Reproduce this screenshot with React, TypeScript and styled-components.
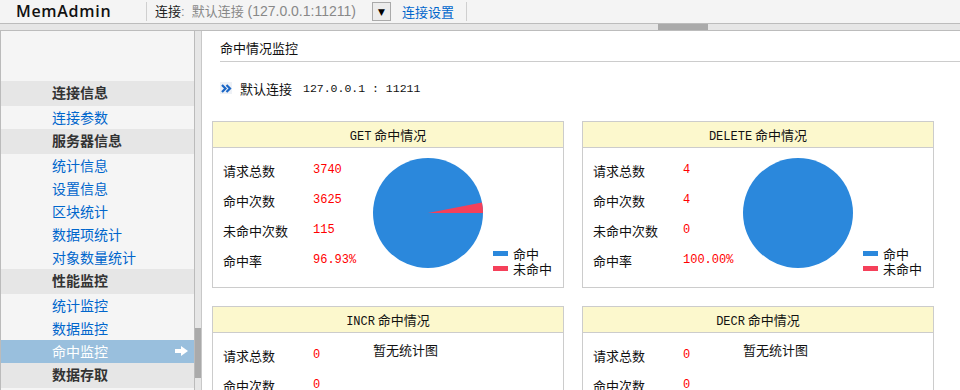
import React from 'react';
import styled, { createGlobalStyle } from 'styled-components';

const GlobalStyle = createGlobalStyle`
  html, body {
    margin: 0;
    padding: 0;
    background: #fff;
  }
  body {
    font-family: "Noto Sans CJK SC", sans-serif;
    font-size: 13px;
    color: #222;
  }
  #root {
    width: 960px;
    height: 390px;
    overflow: hidden;
  }
`;

const Page = styled.div`
  display: flex;
  flex-direction: column;
  height: 390px;
`;

const TopBar = styled.div`
  height: 23px;
  background: #f4f4f4;
  border-bottom: 1px solid #bcbcbc;
  display: flex;
  align-items: center;
  flex: 0 0 auto;
`;

const Brand = styled.div`
  width: 130px;
  padding-left: 16px;
  font-family: "Open Sans", "Liberation Sans", sans-serif;
  font-size: 16px;
  font-weight: 600;
  letter-spacing: 0.7px;
  color: #111;
  line-height: 23px;
`;

const Sep = styled.div`
  width: 1px;
  height: 19px;
  background: #cfcfcf;
`;

const ConnText = styled.div`
  width: 225px;
  padding-left: 8px;
  box-sizing: border-box;
  font-family: "Liberation Sans", "Noto Sans CJK SC", sans-serif;
  font-size: 13px;
  line-height: 23px;
  color: #888;
  white-space: nowrap;

  b {
    font-weight: normal;
    color: #222;
  }
`;

const HeadAddr = styled.span`
  font-size: 14px;
`;

const DropBox = styled.div`
  width: 17px;
  height: 17px;
  border: 1px solid #aaa;
  background: #ececec;
  display: flex;
  align-items: center;
  justify-content: center;
  font-size: 9px;
  color: #000;
  font-family: "DejaVu Sans", sans-serif;
`;

const HeadLink = styled.a`
  margin: 0 12px 0 11px;
  font-size: 13px;
  line-height: 23px;
  color: #0066cc;
  text-decoration: none;
`;

const Band = styled.div`
  height: 6px;
  background: #e6e6e6;
  border-bottom: 1px solid #bcbcbc;
  display: flex;
  flex: 0 0 auto;
`;

const Handle = styled.div`
  margin-left: 658px;
  width: 50px;
  height: 6px;
  background: #aaa;
`;

const Main = styled.div`
  flex: 1;
  display: flex;
  min-height: 0;
`;

const Sidebar = styled.div`
  width: 193px;
  flex: 0 0 auto;
  border-left: 1px solid #bbb;
  border-right: 1px solid #bbb;
  background: #f5f5f5;
  padding-top: 50px;
  display: flex;
  flex-direction: column;
`;

const GroupTitle = styled.div`
  height: 25px;
  line-height: 23px;
  padding-left: 51px;
  background: #e6e6e6;
  font-size: 14px;
  font-weight: bold;
  color: #333;
`;

const NavLink = styled.a<{ $active?: boolean }>`
  height: 23px;
  padding: 0 6px 1px 51px;
  box-sizing: border-box;
  display: flex;
  align-items: center;
  justify-content: space-between;
  font-size: 14px;
  line-height: 20px;
  text-decoration: none;
  color: ${p => (p.$active ? '#fff' : '#0066cc')};
  background: ${p => (p.$active ? '#99bfdd' : 'transparent')};
`;

const Gutter = styled.div`
  width: 6px;
  flex: 0 0 auto;
  background: #e6e6e6;
  display: flex;
  flex-direction: column;
`;

const Thumb = styled.div`
  margin-top: 297px;
  height: 50px;
  background: #aaa;
`;

const Content = styled.div`
  flex: 1;
  border-left: 1px solid #c8c8c8;
  background: #fff;
  min-width: 0;
`;

const PageTitle = styled.div`
  margin-left: 18px;
  padding: 8px 0 4px;
  line-height: 18px;
  border-bottom: 1px solid #ccc;
  font-size: 13px;
  color: #111;
`;

const ConnLine = styled.div`
  margin: 16px 0 0 18px;
  height: 20px;
  display: flex;
  align-items: center;
  font-size: 13px;
  color: #111;
`;

const ChevronBox = styled.span`
  width: 12px;
  height: 12px;
  background: #eef1f6;
  display: inline-flex;
  align-items: center;
  justify-content: center;
  margin-right: 8px;
`;

const Mono = styled.span<{ $size?: number }>`
  font-family: "Liberation Mono", monospace;
  font-size: ${p => p.$size ?? 12}px;
`;

const ConnAddr = styled(Mono)`
  margin-left: 11px;
`;

const CardGrid = styled.div`
  margin: 23px 0 0 10px;
  display: grid;
  grid-template-columns: 352px 352px;
  gap: 18px;
`;

const Card = styled.div`
  box-sizing: border-box;
  border: 1px solid #ccc;
  background: #fff;
`;

const CardHead = styled.div`
  height: 25px;
  line-height: 25px;
  background: #fcf8cd;
  border-bottom: 1px solid #ccc;
  text-align: center;
  font-size: 13px;
  color: #111;
`;

const CardBody = styled.div`
  display: flex;
  padding: 7px 0 12px 10px;
`;

const Stats = styled.div`
  width: 150px;
  flex: 0 0 auto;
`;

const StatRow = styled.div`
  height: 30px;
  display: flex;
  align-items: center;
`;

const StatLabel = styled.span`
  width: 90px;
  font-size: 13px;
  color: #111;
`;

const StatValue = styled(Mono)`
  color: #ff0000;
`;

const PieWrap = styled.div`
  margin-top: 3px;
  width: 110px;
  height: 110px;
`;

const Legend = styled.div`
  align-self: flex-end;
  margin: 0 0 -1px 10px;
`;

const LegendItem = styled.div`
  height: 15px;
  line-height: 15px;
  display: flex;
  align-items: center;
  font-size: 13px;
  color: #111;
`;

const Swatch = styled.span<{ $color: string }>`
  width: 15px;
  height: 5px;
  margin-right: 5px;
  background: ${p => p.$color};
`;

const NoChart = styled.div`
  margin-top: 3px;
  line-height: 14px;
  font-size: 13px;
  color: #111;
`;

const HIT = '#2b88dc';
const MISS = '#f5405a';

type Stat = {
  op: string;
  total: number;
  hits: number;
  misses: number;
  rate: string;
  chart: boolean;
};

const stats: Stat[] = [
  { op: 'GET', total: 3740, hits: 3625, misses: 115, rate: '96.93%', chart: true },
  { op: 'DELETE', total: 4, hits: 4, misses: 0, rate: '100.00%', chart: true },
  { op: 'INCR', total: 0, hits: 0, misses: 0, rate: '0.00%', chart: false },
  { op: 'DECR', total: 0, hits: 0, misses: 0, rate: '0.00%', chart: false },
];

const Pie: React.FC<{ hits: number; total: number }> = ({ hits, total }) => {
  const r = 55;
  const c = 55;
  const missFrac = total ? (total - hits) / total : 0;
  const a = missFrac * Math.PI * 2;
  const x = c + r * Math.cos(a);
  const y = c - r * Math.sin(a);
  return (
    <svg width="110" height="110" viewBox="0 0 110 110">
      <circle cx={c} cy={c} r={r} fill={HIT} />
      {missFrac > 0 && (
        <path d={`M${c} ${c} L${c + r} ${c} A${r} ${r} 0 ${a > Math.PI ? 1 : 0} 0 ${x} ${y} Z`} fill={MISS} />
      )}
    </svg>
  );
};

const StatCard: React.FC<{ s: Stat }> = ({ s }) => (
  <Card>
    <CardHead>
      <Mono>{s.op}</Mono> 命中情况
    </CardHead>
    <CardBody>
      <Stats>
        <StatRow>
          <StatLabel>请求总数</StatLabel>
          <StatValue>{s.total}</StatValue>
        </StatRow>
        <StatRow>
          <StatLabel>命中次数</StatLabel>
          <StatValue>{s.hits}</StatValue>
        </StatRow>
        <StatRow>
          <StatLabel>未命中次数</StatLabel>
          <StatValue>{s.misses}</StatValue>
        </StatRow>
        <StatRow>
          <StatLabel>命中率</StatLabel>
          <StatValue>{s.rate}</StatValue>
        </StatRow>
      </Stats>
      {s.chart ? (
        <>
          <PieWrap>
            <Pie hits={s.hits} total={s.total} />
          </PieWrap>
          <Legend>
            <LegendItem>
              <Swatch $color={HIT} />
              命中
            </LegendItem>
            <LegendItem>
              <Swatch $color={MISS} />
              未命中
            </LegendItem>
          </Legend>
        </>
      ) : (
        <NoChart>暂无统计图</NoChart>
      )}
    </CardBody>
  </Card>
);

const ArrowIcon = () => (
  <svg width="13" height="10" viewBox="0 0 13 10">
    <rect x="0" y="3" width="7" height="4" fill="#fff" />
    <path d="M6 0 L13 5 L6 10 Z" fill="#fff" />
  </svg>
);

const nav: Array<{ title: string; links: string[] }> = [
  { title: '连接信息', links: ['连接参数'] },
  { title: '服务器信息', links: ['统计信息', '设置信息', '区块统计', '数据项统计', '对象数量统计'] },
  { title: '性能监控', links: ['统计监控', '数据监控', '命中监控'] },
  { title: '数据存取', links: [] },
];

export default function App() {
  return (
    <Page>
      <GlobalStyle />
      <TopBar>
        <Brand>MemAdmin</Brand>
        <Sep />
        <ConnText>
          <b>连接</b>:&nbsp; 默认连接 <HeadAddr>(127.0.0.1:11211)</HeadAddr>
        </ConnText>
        <DropBox>▼</DropBox>
        <HeadLink href="#">连接设置</HeadLink>
        <Sep />
      </TopBar>
      <Band>
        <Handle />
      </Band>
      <Main>
        <Sidebar>
          {nav.map(g => (
            <React.Fragment key={g.title}>
              <GroupTitle>{g.title}</GroupTitle>
              {g.links.map(l => (
                <NavLink key={l} href="#" $active={l === '命中监控'}>
                  {l}
                  {l === '命中监控' && <ArrowIcon />}
                </NavLink>
              ))}
            </React.Fragment>
          ))}
        </Sidebar>
        <Gutter>
          <Thumb />
        </Gutter>
        <Content>
          <PageTitle>命中情况监控</PageTitle>
          <ConnLine>
            <ChevronBox>
              <svg width="11" height="9" viewBox="0 0 11 9">
                <path d="M1 1 L4.5 4.5 L1 8 M5.5 1 L9 4.5 L5.5 8" stroke="#1a66c6" strokeWidth="2.2" fill="none" />
              </svg>
            </ChevronBox>
            默认连接
            <ConnAddr $size={11.5}>127.0.0.1 : 11211</ConnAddr>
          </ConnLine>
          <CardGrid>
            {stats.map(s => (
              <StatCard key={s.op} s={s} />
            ))}
          </CardGrid>
        </Content>
      </Main>
    </Page>
  );
}
